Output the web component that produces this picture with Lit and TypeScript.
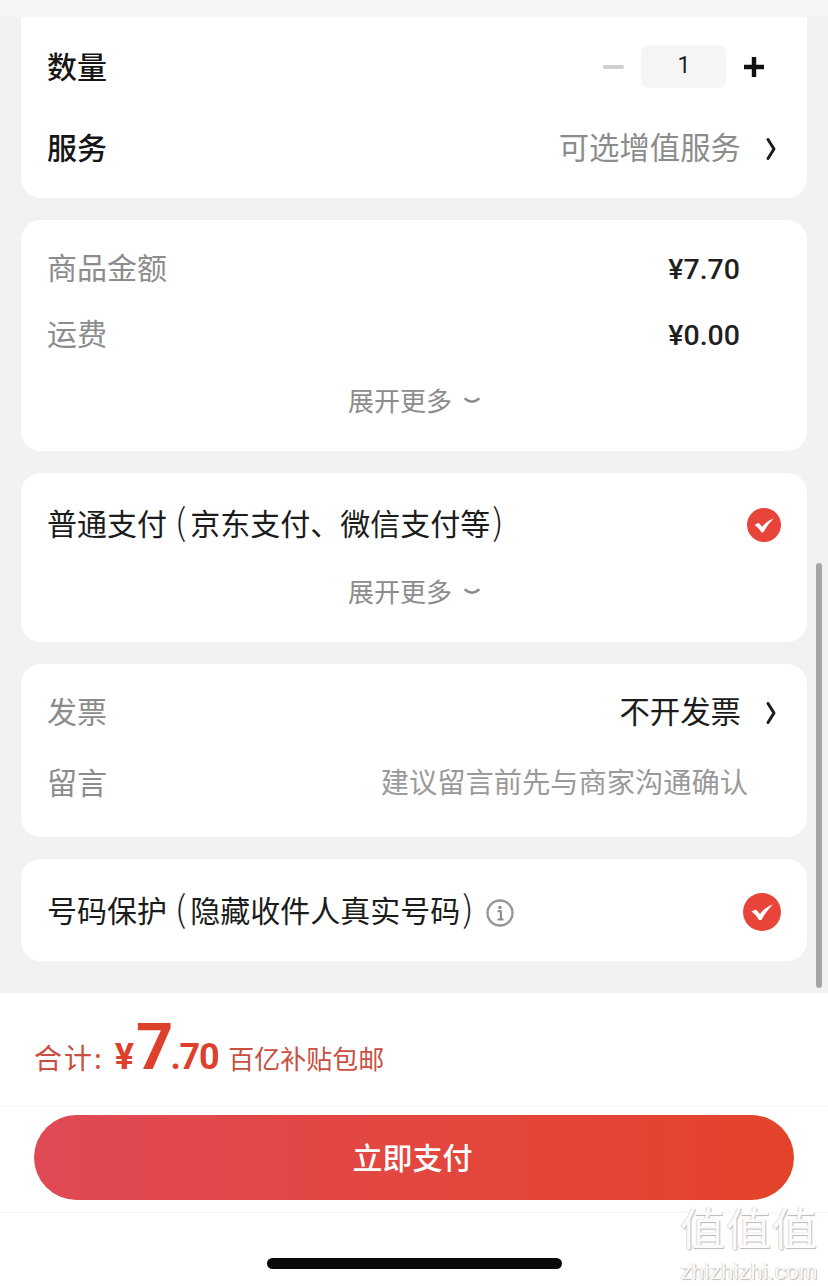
import { LitElement, html, css, svg } from "lit";
import { customElement } from "lit/decorators.js";

const chevron = html`<svg class="chev" viewBox="0 0 12 24" width="12" height="24"><path d="M3 2.5 L9 12 L3 21.5" fill="none" stroke="#1c1c1c" stroke-width="3" stroke-linecap="round" stroke-linejoin="round"/></svg>`;
const more = html`<div class="more"><span class="tx">展开更多</span><svg viewBox="0 0 16 8" width="16" height="8"><path d="M1.5 2 Q8 7.5 14.5 2" fill="none" stroke="#8a8a8a" stroke-width="2.6" stroke-linecap="round"/></svg></div>`;
const check = (size: number) => html`<svg class="blk" viewBox="0 0 38 38" width=${size} height=${size}>
  <circle cx="19" cy="19" r="19" fill="#e8443a"/>
  ${svg`<path d="M8.5 18.6 L13 16.6 L17 21 C20 16.6 24 13.6 30 11.6 C25.5 16 21.5 21 18.5 27 L16 27 C14 23.6 11.5 21 8.5 18.6 Z" fill="#fff"/>`}
</svg>`;

@customElement("app-root")
export class AppRoot extends LitElement {
  static styles = css`
    :host {
      display: block;
      position: relative;
      width: 828px;
      height: 1286px;
      overflow: hidden;
      background: #fff;
      font-family: "Noto Sans CJK SC", "Noto Sans", sans-serif;
      color: #1c1c1c;
    }
    .main {
      height: 993px;
      box-sizing: border-box;
      background: #f2f2f2;
      display: flex;
      flex-direction: column;
      gap: 22px;
      padding: 0 21px;
    }
    .strip {
      height: 17px;
      margin: 0 -21px -22px;
      background: #f5f5f5;
      flex: none;
    }
    .card {
      background: #fff;
      border-radius: 20px;
      padding: 0 26px;
      flex: none;
      display: flex;
      flex-direction: column;
    }
    .c1 { border-radius: 0 0 20px 20px; padding-top: 10px; padding-bottom: 9px; }
    .c1 .row { height: 81px; }
    .c2 { padding-top: 16px; padding-bottom: 17px; }
    .c2 .row { height: 66px; }
    .c3 { padding-top: 18px; padding-bottom: 16px; }
    .c3 .row { height: 67px; }
    .c4 { padding-top: 14px; padding-bottom: 18px; }
    .c4 .row { height: 70.5px; }
    .c5 { height: 102px; box-sizing: border-box; padding-top: 4px; justify-content: center; }
    .row {
      display: flex;
      align-items: center;
      justify-content: space-between;
      font-size: 30px;
      line-height: 40px;
      white-space: nowrap;
    }
    .tx { padding-bottom: 6px; }
    .strong { font-weight: 500; font-size: 30px; color: #161616; }
    .gray { color: #8c8c8c; }
    .right { display: flex; align-items: center; font-size: 30.4px; }
    .right .tx { display: block; }
    .chev { margin-left: 24px; margin-right: 4px; display: block; }
    .price {
      font-family: Roboto, sans-serif;
      font-size: 28.5px;
      font-weight: 500;
      color: #1f1f1f;
      margin-right: 41px;
      padding-top: 2px;
    }
    .stepper { display: flex; align-items: center; margin-right: 16px; padding-bottom: 3px; }
    .minus { width: 21px; height: 4px; border-radius: 2px; background: #cfcfcf; margin: 2px 17px 0 0; }
    .qty {
      width: 85px; height: 43px;
      border-radius: 8px;
      background: #f5f5f5;
      display: flex; align-items: center; justify-content: center;
      font-family: Roboto, sans-serif;
      font-size: 23px;
      color: #222;
      padding-left: 1px;
      box-sizing: border-box;
    }
    .plus { margin: 2px 0 0 17px; display: block; }
    .more {
      display: flex; align-items: center; justify-content: center; gap: 12px;
      height: 66px;
      font-size: 26px;
      color: #8c8c8c;
    }
    .more .tx { padding-bottom: 4px; }
    .more svg { display: block; }
    .c3 .more { height: 68px; }
    .po, .pc { font-size: 36px; font-weight: 300; line-height: 30px; }
    .po { margin-left: 8px; margin-right: 4px; }
    .pc { margin-left: 2px; }
    .ph { font-size: 28.25px; color: #9a9a9a; margin-right: 33px; }
    .blk { display: block; }
    .label { display: flex; align-items: center; }
    .info { margin-left: 12px; display: block; margin-top: 2px; }
    .footer { display: flex; flex-direction: column; }
    .total {
      height: 114px;
      box-sizing: border-box;
      padding: 0 34px;
      display: flex;
      align-items: baseline;
      color: #c9503f;
      font-size: 28px;
      line-height: 109px;
      border-bottom: 1px solid #f6f6f6;
      white-space: nowrap;
    }
    .sum { letter-spacing: 2px; }
    .yen, .big, .dec { font-family: Roboto, sans-serif; font-weight: 700; color: #dd412b; }
    .yen { font-size: 36px; margin-left: 11px; }
    .big { font-size: 65px; margin-left: 2px; }
    .dec { font-size: 36px; letter-spacing: -1.3px; margin-left: -3px; }
    .note { font-size: 26px; margin-left: 10px; }
    .btnwrap {
      padding: 8px 34px 12px;
      border-bottom: 1px solid #f6f6f6;
    }
    .btn {
      height: 85px;
      border-radius: 43px;
      background: linear-gradient(90deg, #e04a55, #e4432a);
      color: #fff;
      font-size: 30px;
      font-weight: 500;
      display: flex; align-items: center; justify-content: center;
      padding-right: 3px;
    }
    .btn span { padding-bottom: 4px; }
    .home { padding-top: 45px; display: flex; justify-content: center; }
    .home i { display: block; width: 295px; height: 11px; border-radius: 6px; background: #0a0a0a; }
    .scroll {
      position: absolute; left: 816px; top: 563px;
      width: 6px; height: 425px; border-radius: 3px; background: #a6a6a6;
    }
    .wm {
      position: absolute; left: 674px; top: 1194px; width: 150px;
      text-align: center;
      color: #fbfbfb;
      text-shadow: 1px 1px 1px #b9b9b9, -1px 0 0 #dedede;
    }
    .wm b { display: block; font-size: 45px; font-weight: 400; line-height: 65px; letter-spacing: 1px; }
    .wm span { display: block; font-family: "Liberation Sans", sans-serif; font-size: 22px; line-height: 25px; letter-spacing: 0.4px; }
  `;

  render() {
    return html`
      <div class="main">
        <div class="strip"></div>
        <section class="card c1">
          <div class="row">
            <span class="strong tx">数量</span>
            <div class="stepper">
              <div class="minus"></div>
              <div class="qty">1</div>
              <svg class="plus" viewBox="0 0 22 22" width="22" height="22"><path d="M11 1v20M1 11h20" stroke="#111" stroke-width="4.4" fill="none"/></svg>
            </div>
          </div>
          <div class="row">
            <span class="strong tx">服务</span>
            <div class="right gray"><span class="tx">可选增值服务</span>${chevron}</div>
          </div>
        </section>
        <section class="card c2">
          <div class="row"><span class="gray tx">商品金额</span><span class="price">¥7.70</span></div>
          <div class="row"><span class="gray tx">运费</span><span class="price">¥0.00</span></div>
          ${more}
        </section>
        <section class="card c3">
          <div class="row">
            <span class="tx">普通支付<span class="po">(</span>京东支付、微信支付等<span class="pc">)</span></span>
            ${check(34)}
          </div>
          ${more}
        </section>
        <section class="card c4">
          <div class="row"><span class="gray tx">发票</span><div class="right"><span class="tx">不开发票</span>${chevron}</div></div>
          <div class="row"><span class="gray tx">留言</span><span class="ph tx">建议留言前先与商家沟通确认</span></div>
        </section>
        <section class="card c5">
          <div class="row">
            <div class="label">
              <span class="tx">号码保护<span class="po">(</span>隐藏收件人真实号码<span class="pc">)</span></span>
              <svg class="info" viewBox="0 0 28 28" width="28" height="28">
                <circle cx="14" cy="14" r="12.5" fill="none" stroke="#979797" stroke-width="2.4"/>
                <circle cx="14" cy="8.4" r="1.7" fill="#888"/>
                <path d="M11.5 12.2h3.4v8M11.5 20.4h6" fill="none" stroke="#888" stroke-width="2"/>
              </svg>
            </div>
            ${check(38)}
          </div>
        </section>
      </div>
      <div class="footer">
        <div class="total">
          <span class="sum">合计:</span><span class="yen">¥</span><span class="big">7</span><span class="dec">.70</span><span class="note">百亿补贴包邮</span>
        </div>
        <div class="btnwrap"><div class="btn"><span>立即支付</span></div></div>
        <div class="home"><i></i></div>
      </div>
      <div class="scroll"></div>
      <div class="wm"><b>值值值</b><span>zhizhizhi.com</span></div>
    `;
  }
}
